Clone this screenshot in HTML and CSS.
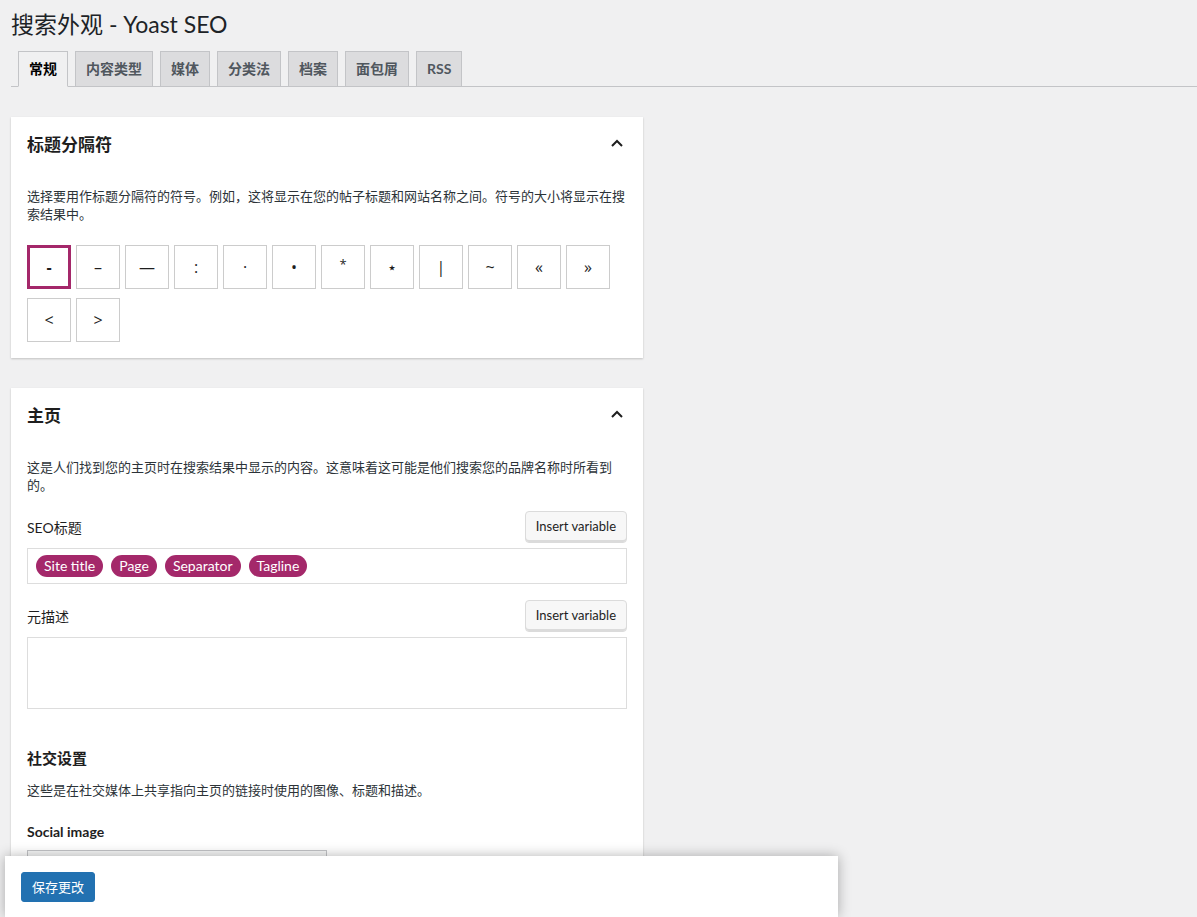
FILE: index.html
```html
<!DOCTYPE html>
<html lang="zh-CN">
<head>
<meta charset="utf-8">
<title>搜索外观 - Yoast SEO</title>
<link rel="stylesheet" href="styles.css">
</head>
<body>
<div class="wrap">
  <h1 class="page-title">搜索外观 - Yoast SEO</h1>
  <nav class="tabs">
    <a class="tab active">常规</a>
    <a class="tab">内容类型</a>
    <a class="tab">媒体</a>
    <a class="tab">分类法</a>
    <a class="tab">档案</a>
    <a class="tab">面包屑</a>
    <a class="tab">RSS</a>
  </nav>

  <div class="cards">
    <section class="card">
      <div class="card-header">
        <h2 class="card-title">标题分隔符</h2>
        <svg class="chev" width="12" height="8" viewBox="0 0 12 8"><polyline points="1,7 6,2 11,7" fill="none" stroke="#1e1e1e" stroke-width="2"/></svg>
      </div>
      <div class="card-body">
        <p class="desc">选择要用作标题分隔符的符号。例如，这将显示在您的帖子标题和网站名称之间。符号的大小将显示在搜索结果中。</p>
        <div class="seps">
          <span class="sep selected">-</span>
          <span class="sep">–</span>
          <span class="sep">—</span>
          <span class="sep">:</span>
          <span class="sep">·</span>
          <span class="sep">•</span>
          <span class="sep small">*</span>
          <span class="sep">⋆</span>
          <span class="sep">|</span>
          <span class="sep">~</span>
          <span class="sep">«</span>
          <span class="sep">»</span>
          <span class="sep">&lt;</span>
          <span class="sep">&gt;</span>
        </div>
      </div>
    </section>

    <section class="card">
      <div class="card-header">
        <h2 class="card-title">主页</h2>
        <svg class="chev" width="12" height="8" viewBox="0 0 12 8"><polyline points="1,7 6,2 11,7" fill="none" stroke="#1e1e1e" stroke-width="2"/></svg>
      </div>
      <div class="card-body">
        <p class="desc">这是人们找到您的主页时在搜索结果中显示的内容。这意味着这可能是他们搜索您的品牌名称时所看到的。</p>
        <div class="field-row first">
          <span class="field-label">SEO标题</span>
          <span class="btn-var">Insert variable</span>
        </div>
        <div class="input-box">
          <span class="pill">Site title</span>
          <span class="pill">Page</span>
          <span class="pill">Separator</span>
          <span class="pill">Tagline</span>
        </div>
        <div class="field-row">
          <span class="field-label">元描述</span>
          <span class="btn-var">Insert variable</span>
        </div>
        <div class="textarea-box"></div>

        <h3 class="sub-title">社交设置</h3>
        <p class="desc small-gap">这些是在社交媒体上共享指向主页的链接时使用的图像、标题和描述。</p>
        <div class="social-label">Social image</div>
        <div class="image-box"></div>
      </div>
    </section>
  </div>
</div>

<div class="savebar">
  <span class="btn-primary">保存更改</span>
</div>
</body>
</html>
```

FILE: styles.css
```css
html, body {
  margin: 0;
  padding: 0;
  overflow: hidden;
  height: 100%;
}
body {
  background: #f0f0f1;
  font-family: Lato, "Noto Sans CJK SC", sans-serif;
  color: #1e1e1e;
  font-size: 13px;
}
.wrap {
  padding: 9px 0 0 11px;
}
.page-title {
  margin: 0;
  font-size: 23px;
  line-height: 30px;
  font-weight: 400;
  color: #1d2327;
}
.tabs {
  margin-top: 12px;
  display: flex;
  border-bottom: 1px solid #c3c4c7;
  height: 35px;
}
.tab {
  margin-left: 7px;
  box-sizing: border-box;
  height: 36px;
  padding: 5px 10px;
  font-size: 14px;
  line-height: 24px;
  font-weight: 700;
  color: #50575e;
  background: #dcdcde;
  border: 1px solid #c3c4c7;
  white-space: nowrap;
}
.tab.active {
  background: #f0f0f1;
  color: #000;
  border-bottom-color: #f0f0f1;
}
.cards {
  margin-top: 30px;
  display: flex;
  flex-direction: column;
  gap: 30px;
  width: 632px;
}
.card {
  background: #fff;
  box-shadow: 0 1px 2px rgba(0, 0, 0, 0.2);
}
.card-header {
  display: flex;
  justify-content: space-between;
  align-items: center;
  padding: 16px;
}
.card-title {
  margin: 0;
  font-size: 17px;
  line-height: 24px;
  font-weight: 700;
  color: #1e1e1e;
}
.chev {
  margin-right: 4px;
  margin-top: -4px;
}
.card-body {
  padding: 0 16px 16px;
}
.desc {
  margin: 14px 0 0;
  font-size: 13px;
  line-height: 18px;
  color: #2c3338;
}
.seps {
  margin-top: 22px;
  display: flex;
  flex-wrap: wrap;
  gap: 9px 5px;
}
.sep {
  width: 44px;
  height: 44px;
  box-sizing: border-box;
  border: 1px solid #ccc;
  display: flex;
  align-items: center;
  justify-content: center;
  font-size: 16px;
  color: #1e1e1e;
  font-family: "Open Sans", "Noto Sans", sans-serif;
}
.sep.small {
  font-size: 13px;
  padding-bottom: 6px;
}
.sep.selected {
  border: 3px solid #a4286a;
  font-weight: 700;
}
.field-row {
  display: flex;
  justify-content: space-between;
  align-items: center;
  margin-top: 16px;
}
.field-row.first {
  margin-top: 17px;
}
.field-label {
  font-size: 14px;
  line-height: 20px;
  color: #1e1e1e;
  padding-top: 2px;
}
.btn-var {
  height: 32px;
  box-sizing: border-box;
  padding: 0 10px 2px;
  display: flex;
  align-items: center;
  font-size: 13px;
  color: #1e1e1e;
  background: #f7f7f7;
  border: 1px solid #dbdbdb;
  border-radius: 4px;
  box-shadow: inset 0 -2px 0 #dbdbdb;
}
.input-box {
  margin-top: 5px;
  border: 1px solid #ddd;
  padding: 6px 8px;
  display: flex;
  gap: 8px;
}
.pill {
  background: #a4286a;
  color: #fff;
  font-size: 14px;
  line-height: 22px;
  height: 22px;
  padding: 0 8px;
  border-radius: 11px;
}
.textarea-box {
  margin-top: 5px;
  height: 72px;
  box-sizing: border-box;
  border: 1px solid #ddd;
}
.sub-title {
  margin: 38px 0 0;
  font-size: 15px;
  line-height: 22px;
  font-weight: 700;
  color: #1e1e1e;
}
.desc.small-gap {
  margin-top: 12px;
}
.social-label {
  margin-top: 23px;
  font-size: 14px;
  line-height: 20px;
  font-weight: 700;
  color: #1e1e1e;
}
.image-box {
  margin-top: 8px;
  width: 300px;
  height: 40px;
  box-sizing: border-box;
  border: 1px solid #c3c4c7;
  background: #f6f7f7;
}
.savebar {
  position: fixed;
  left: 5px;
  bottom: 0;
  width: 833px;
  height: 61px;
  box-sizing: border-box;
  padding: 16px;
  background: #fff;
  box-shadow: 0 0 12px rgba(0, 0, 0, 0.3);
}
.btn-primary {
  display: inline-block;
  height: 30px;
  box-sizing: border-box;
  padding: 0 10px;
  line-height: 28px;
  font-size: 13px;
  color: #fff;
  background: #2271b1;
  border: 1px solid #2271b1;
  border-radius: 3px;
}
```
